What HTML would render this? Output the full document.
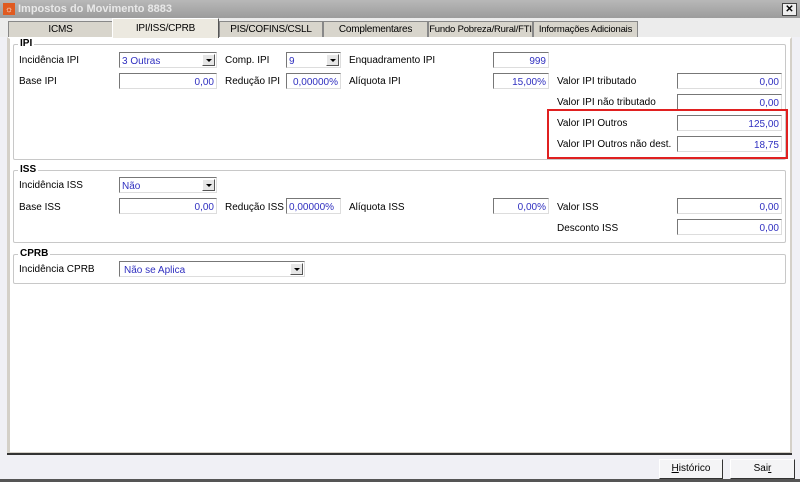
<!DOCTYPE html><html><head><style>
*{box-sizing:border-box}
body{margin:0;width:800px;height:482px;position:relative;overflow:hidden;background:#f0f0f5;font-family:"Liberation Sans",sans-serif;font-size:10px;color:#000;white-space:nowrap}
.a{position:absolute}
.title{left:0;top:0;width:800px;height:18px;background:linear-gradient(#b8b8b8,#9c9c9c);color:#e8e8e8;font-weight:bold;font-size:11px;line-height:18px;padding-left:18px}
.tab{top:21px;height:16px;background:#d8d5cc;border:1px solid #888;border-bottom:none;text-align:center;line-height:15px;letter-spacing:-0.2px;overflow:hidden}
.sel{top:18px;height:20px;background:#ece9e0;z-index:2;border-color:#fff #555 #fff #fff}
.panel{left:7px;top:37px;width:785px;height:417px;background:#fff;border:2px solid;border-color:#fff #d4d0c8 #d4d0c8 #d4d0c8;border-left:3px solid #d4d0c8}
.grp{border:1px solid #c8c8c8;border-radius:2px}
.leg{background:#fff;font-weight:bold;font-size:10px;padding:0 2px}
.inp{height:16px;border:1px solid;border-color:#777 #ddd #ddd #777;background:#fff;color:#3030c0;text-align:right;padding-right:2px;line-height:15px;padding-top:1px}
.sl{text-align:left;padding-left:2px}
.dd{position:absolute;right:1px;top:1px;width:13px;height:12px;background:#e6e6e6;border:1px solid;border-color:#fff #555 #555 #fff}
.dd:after{content:"";position:absolute;left:3px;top:4px;border:3px solid transparent;border-top:3px solid #000}
.btn{top:459px;height:20px;background:#f4f4f6;border:1px solid;border-color:#fff #333 #333 #fff;text-align:center;line-height:18px}
</style></head><body>
<div class="a title">Impostos do Movimento 8883</div>
<div class="a" style="left:3px;top:3px;width:12px;height:12px;background:#e05a20;color:#fff;font-size:9px;line-height:12px;text-align:center">☼</div>
<div class="a" style="left:782px;top:3px;width:15px;height:13px;background:#eee;border:1px solid #444;font-size:10px;line-height:11px;text-align:center;font-weight:bold">✕</div>
<div class="a" style="left:0;top:18px;width:800px;height:19px;background:#ececec"></div>
<div class="a tab" style="left:8px;width:105px">ICMS</div>
<div class="a tab sel" style="left:112px;width:107px;line-height:20px">IPI/ISS/CPRB</div>
<div class="a tab" style="left:219px;width:104px">PIS/COFINS/CSLL</div>
<div class="a tab" style="left:323px;width:105px">Complementares</div>
<div class="a tab" style="left:428px;width:105px;font-size:9.5px">Fundo Pobreza/Rural/FTI</div>
<div class="a tab" style="left:533px;width:105px;font-size:9.5px">Informações Adicionais</div>
<div class="a panel"></div>
<div class="a" style="left:7px;top:453px;width:785px;height:2px;background:#333"></div>

<div class="a grp" style="left:13px;top:44px;width:773px;height:116px"></div>
<div class="a leg" style="left:18px;top:38px">IPI</div>
<div class="a" style="left:19px;top:55px">Incidência IPI</div>
<div class="a inp sl" style="left:119px;top:52px;width:98px">3 Outras<span class="dd"></span></div>
<div class="a" style="left:225px;top:55px">Comp. IPI</div>
<div class="a inp sl" style="left:286px;top:52px;width:55px">9<span class="dd"></span></div>
<div class="a" style="left:349px;top:55px">Enquadramento IPI</div>
<div class="a inp" style="left:493px;top:52px;width:56px">999</div>
<div class="a" style="left:19px;top:76px">Base IPI</div>
<div class="a inp" style="left:119px;top:73px;width:98px">0,00</div>
<div class="a" style="left:225px;top:76px">Redução IPI</div>
<div class="a inp" style="left:286px;top:73px;width:55px">0,00000%</div>
<div class="a" style="left:349px;top:76px">Alíquota IPI</div>
<div class="a inp" style="left:493px;top:73px;width:56px">15,00%</div>
<div class="a" style="left:557px;top:76px">Valor IPI tributado</div>
<div class="a inp" style="left:677px;top:73px;width:105px">0,00</div>
<div class="a" style="left:557px;top:97px">Valor IPI não tributado</div>
<div class="a inp" style="left:677px;top:94px;width:105px">0,00</div>
<div class="a" style="left:557px;top:118px">Valor IPI Outros</div>
<div class="a inp" style="left:677px;top:115px;width:105px">125,00</div>
<div class="a" style="left:557px;top:139px">Valor IPI Outros não dest.</div>
<div class="a inp" style="left:677px;top:136px;width:105px">18,75</div>
<div class="a" style="left:547px;top:109px;width:241px;height:50px;border:2px solid #e02020"></div>

<div class="a grp" style="left:13px;top:170px;width:773px;height:73px"></div>
<div class="a leg" style="left:18px;top:164px">ISS</div>
<div class="a" style="left:19px;top:180px">Incidência ISS</div>
<div class="a inp sl" style="left:119px;top:177px;width:98px">Não<span class="dd"></span></div>
<div class="a" style="left:19px;top:202px">Base ISS</div>
<div class="a inp" style="left:119px;top:198px;width:98px">0,00</div>
<div class="a" style="left:225px;top:202px">Redução ISS</div>
<div class="a inp sl" style="left:286px;top:198px;width:55px">0,00000%</div>
<div class="a" style="left:349px;top:202px">Alíquota ISS</div>
<div class="a inp" style="left:493px;top:198px;width:56px">0,00%</div>
<div class="a" style="left:557px;top:202px">Valor ISS</div>
<div class="a inp" style="left:677px;top:198px;width:105px">0,00</div>
<div class="a" style="left:557px;top:223px">Desconto ISS</div>
<div class="a inp" style="left:677px;top:219px;width:105px">0,00</div>

<div class="a grp" style="left:13px;top:254px;width:773px;height:30px"></div>
<div class="a leg" style="left:18px;top:248px">CPRB</div>
<div class="a" style="left:19px;top:264px">Incidência CPRB</div>
<div class="a inp sl" style="left:119px;top:261px;width:186px;padding-left:4px">Não se Aplica<span class="dd"></span></div>

<div class="a btn" style="left:659px;top:459px;width:64px"><u>H</u>istórico</div>
<div class="a btn" style="left:730px;top:459px;width:65px">Sai<u>r</u></div>
<div class="a" style="left:0;top:479px;width:800px;height:3px;background:#555"></div>
</body></html>
